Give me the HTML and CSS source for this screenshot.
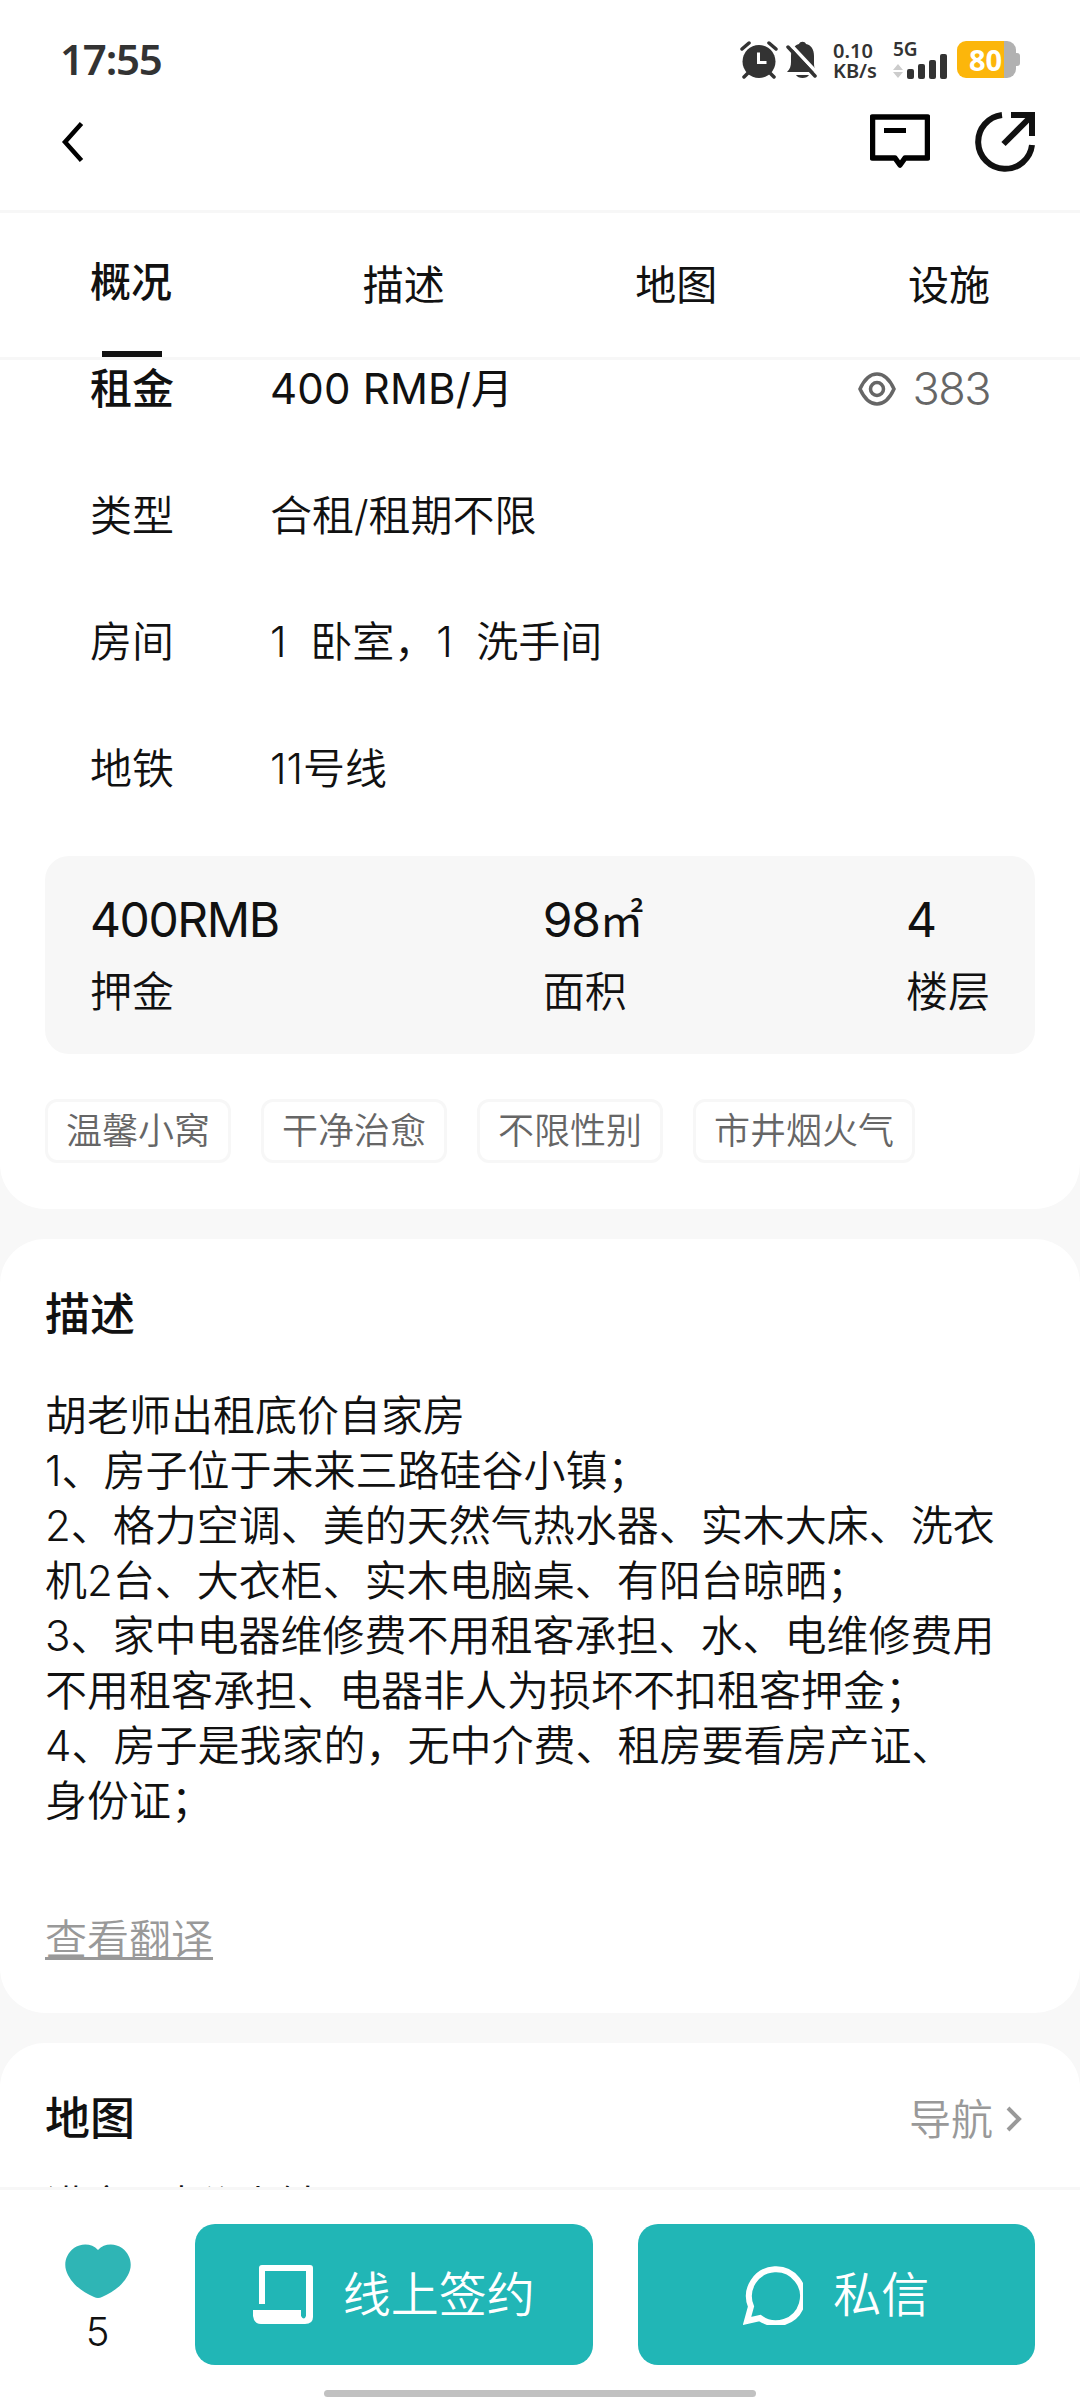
FILE: index.html
```
<!DOCTYPE html>
<html lang="zh">

<head>
  <meta charset="UTF-8">
  <meta name="viewport" content="width=device-width, initial-scale=1.0">
  <title>房源详情</title>
  <link rel="stylesheet" href="styles.css">
</head>

<body>
  <div class="page">
    <!-- 状态栏 -->
    <div class="status-bar">
      <span class="time">17:55</span>
      <div class="status-icons">
        <svg class="icon-alarm" width="38" height="38" viewBox="0 0 38 38">
          <circle cx="19" cy="20.500" r="16.500" fill="#333" />
          <path d="M2 8l7-6M36 8l-7-6M8 32l-4 4M30 32l4 4" stroke="#333" stroke-width="3.500" stroke-linecap="round" />
          <path d="M18.500 11.500v10h8" fill="none" stroke="#fff" stroke-width="3" />
        </svg>
        <svg class="icon-bell" width="32" height="38" viewBox="0 0 32 38">
          <path d="M1 31c3-3 4-6 4-10v-6C5 8 9 4 13 3c1-3 6-3 7 0 5 1 8 5 8 12v8c0 3 1 6 3 8z" fill="#333" />
          <path d="M10 34h13c-2 4-11 4-13 0z" fill="#333" />
          <path d="M4 3l29 31" stroke="#fff" stroke-width="3.500" />
          <path d="M2 6l27 29" stroke="#333" stroke-width="3.500" stroke-linecap="round" />
        </svg>
        <div class="speed">
          <span>0.10</span>
          <span>KB/s</span>
        </div>
        <div class="network">
          <span>5G</span>
          <svg width="55" height="26" viewBox="0 0 55 26">
            <path d="M0 17l5-6 5 6zM0 19l5 6 5-6z" fill="#ccc" />
            <g fill="#333">
              <rect x="14" y="16" width="7" height="10" rx="2" />
              <rect x="25" y="11" width="7" height="15" rx="2" />
              <rect x="36" y="7" width="7" height="19" rx="2" />
              <rect x="47" y="1" width="7" height="25" rx="2" />
            </g>
          </svg>
        </div>
        <div class="battery">80</div>
      </div>
    </div>

    <!-- 导航栏 -->
    <div class="nav-bar">
      <svg width="24" height="42" viewBox="0 0 24 42">
        <path d="M21.500 2.500L5 21l16.500 18.500" fill="none" stroke="#000" stroke-width="4.500" />
      </svg>
      <div class="nav-actions">
        <svg width="60" height="60" viewBox="0 0 60 60">
          <path d="M2.500 5h55v41H35l-5 7-5-7H2.500z" fill="none" stroke="#000" stroke-width="5.500" stroke-linejoin="round" />
          <path d="M14 18.500h22" stroke="#000" stroke-width="5" />
        </svg>
        <svg width="60" height="60" viewBox="0 0 60 60">
          <path d="M27 3A27 27 0 1 0 57 33" fill="none" stroke="#111" stroke-width="6" />
          <path d="M28.500 32L56 4.500" stroke="#111" stroke-width="6" />
          <path d="M36 0h24v24h-6V6H36z" fill="#111" />
        </svg>
      </div>
    </div>

    <!-- 标签 -->
    <div class="tabs">
      <div class="tab active">概况</div>
      <div class="tab">描述</div>
      <div class="tab">地图</div>
      <div class="tab">设施</div>
    </div>

    <div class="content">
      <section class="section overview">
        <div class="row rent">
          <span class="label">租金</span>
          <span class="value">400 RMB/月</span>
          <span class="views">
            <svg width="38" height="34" viewBox="0 0 38 34">
              <path d="M2 17C7 6 13 2 19 2s12 4 17 15C31 28 25 32 19 32S7 28 2 17z" fill="none" stroke="#666" stroke-width="3.500" />
              <circle cx="19" cy="17" r="6.500" fill="none" stroke="#666" stroke-width="3.500" />
            </svg>
            <span class="count">383</span>
          </span>
        </div>
        <div class="row">
          <span class="label">类型</span>
          <span class="value">合租/租期不限</span>
        </div>
        <div class="row">
          <span class="label">房间</span>
          <span class="value">1&nbsp; 卧室，1&nbsp; 洗手间</span>
        </div>
        <div class="row">
          <span class="label">地铁</span>
          <span class="value">11号线</span>
        </div>

        <div class="info-card">
          <div class="info-item"><b>400RMB</b><span>押金</span></div>
          <div class="info-item"><b>98<span class="unit">㎡</span></b><span>面积</span></div>
          <div class="info-item"><b>4</b><span>楼层</span></div>
        </div>

        <div class="tags">
          <span class="tag">温馨小窝</span>
          <span class="tag">干净治愈</span>
          <span class="tag">不限性别</span>
          <span class="tag">市井烟火气</span>
        </div>
      </section>

      <section class="section desc">
        <h2>描述</h2>
        <p>胡老师出租底价自家房<br>
          1、房子位于未来三路硅谷小镇；<br>
          2、格力空调、美的天然气热水器、实木大床、洗衣<br>
          机2台、大衣柜、实木电脑桌、有阳台晾晒；<br>
          3、家中电器维修费不用租客承担、水、电维修费用<br>
          不用租客承担、电器非人为损坏不扣租客押金；<br>
          4、房子是我家的，无中介费、租房要看房产证、<br>
          身份证；</p>
        <a class="translate">查看翻译</a>
      </section>

      <section class="section map">
        <div class="map-header">
          <h2>地图</h2>
          <span class="guide">
            导航
            <svg width="18" height="28" viewBox="0 0 18 28">
              <path d="M3 3l11 11L3 25" fill="none" stroke="#999" stroke-width="4" />
            </svg>
          </span>
        </div>
        <p class="address">满京&nbsp; 硅谷小镇</p>
      </section>
    </div>

    <!-- 底部操作栏 -->
    <div class="bottom-bar">
      <div class="actions">
        <div class="like">
          <svg width="66" height="54" viewBox="0 0 66 54">
            <path d="M33 6C39-1 50-1 57 4c8 6 10 15 8 22-4 13-16 22-28 27q-4 2-8 0C17 48 5 39 1 26-1 19 1 10 9 4c7-5 18-5 24 2z" fill="#2fb5b5" />
          </svg>
          <span>5</span>
        </div>
        <div class="btn">
          <svg width="60" height="60" viewBox="0 0 60 60">
            <path d="M6 39V3q0-3 3-3h48q3 0 3 3v49q0 7-8 7H8q-7 0-8-8v-6h48v6q3 5 5 0V6H12v33z" fill="#fff" />
          </svg>
          线上签约
        </div>
        <div class="btn">
          <svg width="60" height="60" viewBox="0 0 60 60">
            <path d="M4 56l4-14.500A27 27 0 1 1 17 53z" fill="none" stroke="#fff" stroke-width="6" />
          </svg>
          私信
        </div>
      </div>
      <div class="home-line"></div>
    </div>
  </div>
</body>

</html>
```

FILE: styles.css
```
* {
  margin: 0;
  padding: 0;
  box-sizing: border-box;
}

body {
  font-family: Inter, "Noto Sans CJK SC", sans-serif;
  font-size: 42px;
  font-weight: 350;
  line-height: 55px;
  color: #111;
  background: #f8f8f8;
}

svg {
  display: block;
  flex-shrink: 0;
}

.page {
  width: 1080px;
  height: 2400px;
  display: flex;
  flex-direction: column;
  overflow: hidden;
}

/* 状态栏 */
.status-bar {
  height: 102px;
  padding: 41px 60px 0;
  display: flex;
  justify-content: space-between;
  align-items: flex-start;
  background: #fff;
  color: #333;
}

.time {
  font-family: "Noto Sans", sans-serif;
  font-size: 42px;
  font-weight: 600;
  line-height: 36px;
  letter-spacing: -1.2px;
}

.status-icons {
  display: flex;
  height: 38px;
}

.icon-alarm {
  margin-right: 8px;
}

.speed {
  width: 44px;
  margin-left: 15px;
  display: flex;
  flex-direction: column;
  font: 600 20px/20px "Noto Sans", sans-serif;
}

.network {
  width: 55px;
  margin-left: 16px;
  display: flex;
  flex-direction: column;
  font: 600 19px/12px "Noto Sans", sans-serif;
}

.network span {
  height: 12px;
  padding-top: 2px;
}

.battery {
  position: relative;
  width: 59px;
  height: 37px;
  margin-left: 9px;
  margin-right: 4px;
  border-radius: 9px;
  background: linear-gradient(to right, #fcb60b 47px, #b1b1b1 47px);
  color: #fff;
  font: 700 29px/37px "Noto Sans", sans-serif;
  padding-left: 12px;
}

.battery::after {
  content: "";
  position: absolute;
  left: 59px;
  top: 12px;
  width: 4px;
  height: 13px;
  border-radius: 0 3px 3px 0;
  background: #b1b1b1;
}

/* 导航栏 */
.nav-bar {
  height: 111px;
  padding: 0 45px 29px 60px;
  border-bottom: 3px solid #f7f7f7;
  background: #fff;
  display: flex;
  align-items: center;
  justify-content: space-between;
}

.nav-actions {
  display: flex;
  gap: 45px;
}

/* 标签 */
.tabs {
  height: 147px;
  padding: 0 90px;
  border-bottom: 3px solid #f7f7f7;
  background: #fff;
  display: flex;
  justify-content: space-between;
}

.tab {
  height: 144px;
  font-size: 41px;
  font-weight: 400;
  line-height: 144px;
}

.tab.active {
  font-weight: 500;
  line-height: 139px;
  background: linear-gradient(#111, #111) 12px bottom / 60px 6px no-repeat;
}

/* 内容 */
.content {
  flex: 1;
  min-height: 0;
  overflow: hidden;
  display: flex;
  flex-direction: column;
  gap: 30px;
}

.section {
  flex-shrink: 0;
  padding: 0 45px;
  border-radius: 45px;
  background: #fff;
}

.overview {
  height: 849px;
  padding-top: 1px;
  border-radius: 0 0 45px 45px;
}

.row {
  display: flex;
  align-items: center;
  padding: 0 45px;
  height: 55px;
  margin-bottom: 71.600px;
}

.label {
  width: 180px;
}

.rent .label {
  font-weight: 500;
}

.rent .value {
  font-weight: 430;
  letter-spacing: 0.2px;
}

.views {
  margin-left: auto;
  display: flex;
  align-items: center;
  gap: 16px;
  font-size: 45px;
  font-weight: 300;
  color: #666;
}

.count {
  letter-spacing: -1.5px;
}

.info-card {
  height: 198px;
  margin-top: -11px;
  padding: 33px 45px 0;
  border-radius: 24px;
  background: #f7f7f7;
  display: flex;
  justify-content: space-between;
}

.info-item {
  display: flex;
  flex-direction: column;
}

.info-item b {
  height: 75px;
  font-size: 48px;
  font-weight: 400;
  line-height: 62px;
  letter-spacing: -1.4px;
}

.unit {
  font-size: 44px;
}

.tags {
  display: flex;
  gap: 30px;
  margin-top: 45px;
}

.tag {
  height: 64px;
  padding: 0 18px;
  border: 3px solid #f7f7f7;
  border-radius: 12px;
  font-size: 36px;
  line-height: 59px;
  color: #666;
}

h2 {
  font-size: 45px;
  font-weight: 500;
  line-height: 60px;
}

.desc {
  height: 774px;
  padding-top: 46px;
}

.desc p {
  margin-top: 43px;
  white-space: nowrap;
}

.translate {
  display: block;
  margin-top: 84px;
  color: #999;
  text-decoration: underline;
  text-decoration-thickness: 3px;
}

.map {
  height: 400px;
  padding-top: 46px;
}

.map-header {
  display: flex;
  justify-content: space-between;
}

.guide {
  display: flex;
  align-items: center;
  gap: 12px;
  padding-right: 12px;
  color: #999;
}

.address {
  margin-top: 29px;
}

/* 底部操作栏 */
.bottom-bar {
  height: 213px;
  border-top: 3px solid #f7f7f7;
  background: #fff;
  padding-top: 34px;
}

.actions {
  height: 141px;
  padding-right: 45px;
  display: flex;
}

.like {
  width: 195px;
  padding-top: 20px;
  display: flex;
  flex-direction: column;
  align-items: center;
}

.like span {
  margin-top: 6px;
  font-size: 40px;
}

.btn {
  flex: 1;
  display: flex;
  align-items: center;
  justify-content: center;
  gap: 30px;
  border-radius: 20px;
  background: #21b6b6;
  color: #fff;
  font-size: 48px;
}

.btn + .btn {
  margin-left: 45px;
}

.home-line {
  width: 432px;
  height: 7px;
  margin: 25px auto 0;
  border-radius: 4px;
  background: #c1c1c1;
}
```
